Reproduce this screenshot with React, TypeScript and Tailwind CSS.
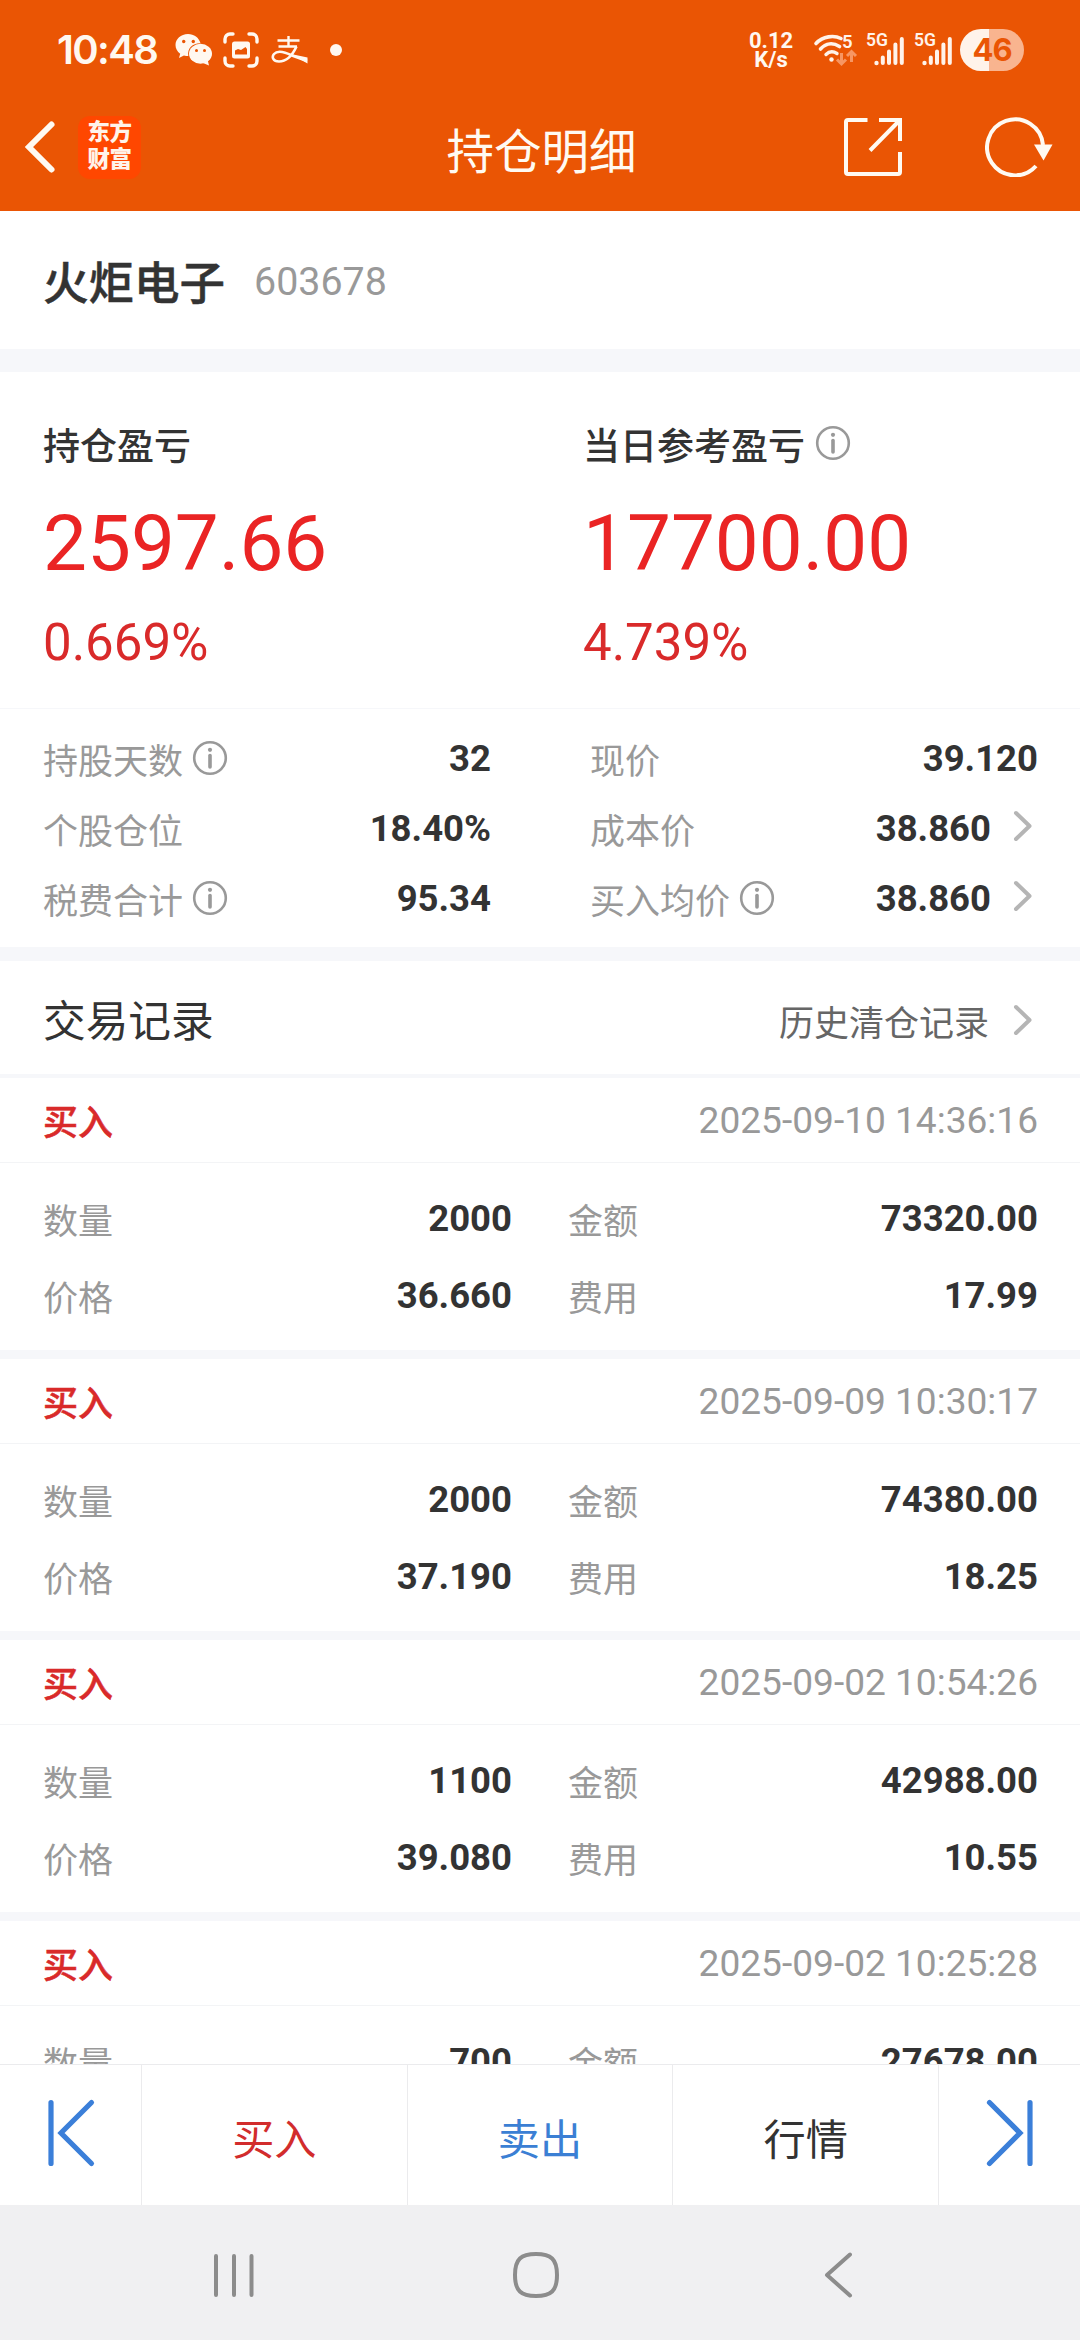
import type { ReactNode } from "react";
import clsx from "clsx";

type Trade = {
  side: string;
  time: string;
  quantity: string;
  amount: string;
  price: string;
  fee: string;
};

const trades: Trade[] = [
  { side: "买入", time: "2025-09-10 14:36:16", quantity: "2000", amount: "73320.00", price: "36.660", fee: "17.99" },
  { side: "买入", time: "2025-09-09 10:30:17", quantity: "2000", amount: "74380.00", price: "37.190", fee: "18.25" },
  { side: "买入", time: "2025-09-02 10:54:26", quantity: "1100", amount: "42988.00", price: "39.080", fee: "10.55" },
  { side: "买入", time: "2025-09-02 10:25:28", quantity: "700", amount: "27678.00", price: "39.540", fee: "6.79" },
];

const InfoIcon = () => (
  <svg width="36" height="36" viewBox="0 0 36 36" fill="none" className="shrink-0">
    <circle cx="18" cy="18" r="15.8" stroke="#999" strokeWidth="2.6" />
    <circle cx="18" cy="9.8" r="2.1" fill="#999" />
    <path d="M18 15.5V27" stroke="#999" strokeWidth="3.6" strokeLinecap="round" />
  </svg>
);

const ChevronIcon = () => (
  <svg width="20" height="32" viewBox="0 0 20 32" fill="none" className="shrink-0">
    <path d="M3 3L16.5 16L3 29" stroke="#b5b5b5" strokeWidth="4" strokeLinecap="round" strokeLinejoin="round" />
  </svg>
);

const SignalIcon = () => (
  <svg width="40" height="36" viewBox="0 0 40 36" className="shrink-0 overflow-visible">
    <text x="0" y="13.5" fontSize="17.5" fontWeight="600" fill="#fff3ea" fontFamily="Roboto, sans-serif" textLength="22">
      5G
    </text>
    <circle cx="10.5" cy="31" r="2.2" fill="#fff3ea" />
    <path d="M16.8 25.5V31M23 19.5V31M29.4 12.5V31M35.8 7V31" stroke="#fff3ea" strokeWidth="4" strokeLinecap="round" />
  </svg>
);

const StatusBar = () => (
  <div className="flex h-[84px] items-center justify-between pt-4 pr-14 pl-[57px] text-[#fff8f0]">
    <div className="flex items-center">
      <span className="w-[101px] font-[Inter] text-[40px] leading-none font-semibold tracking-[-1.6px]">10:48</span>
      {/* wechat */}
      <svg width="38" height="34" viewBox="0 0 38 34" className="ml-[17px]">
        <path
          fill="currentColor"
          d="M13 1C5.8 1 .5 6 .5 12c0 3.6 1.7 6.5 4.7 8.7L4 25l4.900-2.600c1.600.4 3 .6 4.400.6C12 15 18 10 25.500 10.300 24 4.500 19 1 13 1Z"
        />
        <ellipse cx="25.5" cy="20.8" rx="11.5" ry="10" fill="currentColor" />
        <path fill="currentColor" d="M28 30l6 2.500-1.200-5z" />
        <g fill="#ea5504">
          <circle cx="8.7" cy="8.5" r="1.7" />
          <circle cx="18.3" cy="8.5" r="1.7" />
          <circle cx="21.5" cy="17.5" r="1.5" />
          <circle cx="29.5" cy="17.5" r="1.5" />
        </g>
      </svg>
      {/* screenshot */}
      <svg width="36" height="36" viewBox="0 0 36 36" fill="none" className="ml-2.5">
        <path
          d="M10 2H7a5 5 0 0 0-5 5v3M26 2h3a5 5 0 0 1 5 5v3M10 34H7a5 5 0 0 1-5-5v-3M26 34h3a5 5 0 0 0 5-5v-3"
          stroke="currentColor"
          strokeWidth="3.4"
          strokeLinecap="round"
        />
        <rect x="9" y="9.5" width="18" height="17" rx="2.5" fill="currentColor" />
        <path d="M12 22.500v-4l3-1.500 3 1 4.500-3 1.500 2v5.500z" fill="#ea5504" />
      </svg>
      {/* alipay */}
      <svg width="38" height="30" viewBox="0 0 38 30" fill="none" stroke="currentColor" className="ml-3">
        <path d="M6.5 5.5H28.5M17.5 1V11.5M7.5 11.5H26" strokeWidth="2.4" />
        <path d="M25.5 11.5C22 19 16 26.5 8 26.5C2 26.5 .5 22 3 19C6.5 15 14 17 21 20.5L36 26" strokeWidth="2.6" />
        <path d="M20 19L36.5 22.5V28.5Z" fill="currentColor" stroke="none" />
      </svg>
      <span className="ml-[21px] size-3 rounded-full bg-[#fff8f0]" />
    </div>
    <div className="flex items-center">
      <div className="w-[46px] text-center font-[Roboto] text-[22px] leading-[19px] font-bold">
        <p>0.12</p>
        <p>K/s</p>
      </div>
      <svg width="46" height="36" viewBox="0 0 46 36" fill="none" className="ml-[19px]" stroke="#fff3ea">
        <path d="M3 11.5C10 4 21 3 28 6.5" strokeWidth="3.6" strokeLinecap="round" />
        <path d="M7.5 17C13 11 20 10.5 26.5 14.5" strokeWidth="3.6" strokeLinecap="round" />
        <path d="M13 22.5C16.5 19 20 19 24 21.5" strokeWidth="3.4" strokeLinecap="round" />
        <circle cx="18.5" cy="27.5" r="2.2" fill="#fff3ea" stroke="none" />
        <text x="29" y="16" fontSize="18.5" fontWeight="600" fill="#fff3ea" stroke="none" fontFamily="Roboto, sans-serif">
          5
        </text>
        <path d="M28.5 21V32M24 27.5L28.5 32L33 27.5M38.5 30V20M34 24L38.5 19.5L43 24" stroke="#f79663" strokeWidth="3" />
      </svg>
      <div className="ml-[7px] flex gap-2">
        <SignalIcon />
        <SignalIcon />
      </div>
      <div className="ml-1.5 flex h-[42px] w-16 items-center justify-center rounded-full bg-linear-to-r from-[#fff3ea] from-45% to-[#f9b48f] to-45% font-[Inter] text-[31px] font-bold tracking-[-1px] text-[#ea5504]">
        46
      </div>
    </div>
  </div>
);

const TitleBar = () => (
  <div className="grid h-[127px] grid-cols-3 items-center pr-[27px] pl-6 pb-px">
    <div className="flex items-center">
      <svg width="32" height="54" viewBox="0 0 32 54" fill="none">
        <path d="M27.5 4.5L5 27L27.5 49.5" stroke="#fffaf2" strokeWidth="6" strokeLinecap="round" />
      </svg>
      <div className="ml-[22px] flex h-[63px] w-[63px] flex-col items-center justify-center rounded-xl bg-[#ff4700] pb-0.5 text-[22.5px] leading-[27px] font-black tracking-[-0.5px] text-[#fff3ea]">
        <span>东方</span>
        <span>财富</span>
      </div>
    </div>
    <h1 className="pt-3.5 pl-1.5 text-center text-[47.5px] text-[#fffaf2]">持仓明细</h1>
    <div className="flex items-center justify-end gap-[82px]">
      <svg width="60" height="60" viewBox="0 0 60 60" fill="none" stroke="#fffaf2" strokeWidth="4">
        <path d="M24.5 3H5a2 2 0 0 0-2 2V55a2 2 0 0 0 2 2H55a2 2 0 0 0 2-2V35M36 3H57V24M56 4L27 33.5" />
      </svg>
      <svg width="68" height="60" viewBox="0 0 68 60" fill="none">
        <path d="M51 49A28 28 0 1 1 58 28" stroke="#fffaf2" strokeWidth="4" />
        <path d="M49 27.5H67.5L58.5 43.5Z" fill="#fffaf2" />
      </svg>
    </div>
  </div>
);

type StatProps = {
  label: string;
  value: string;
  info?: boolean;
  link?: boolean;
};

const Stat = ({ label, value, info, link }: StatProps) => (
  <div className="flex h-[70px] items-center text-[35px] leading-[48px]">
    <span className="pt-2.5 text-[#999]">{label}</span>
    {info && (
      <span className="ml-[9px]">
        <InfoIcon />
      </span>
    )}
    <span className="ml-auto pt-px font-[Roboto] text-[36.5px] font-bold">{value}</span>
    {link && (
      <span className="mr-[5px] mb-1 ml-[22px]">
        <ChevronIcon />
      </span>
    )}
  </div>
);

type ProfitProps = {
  title: string;
  amount: string;
  percent: string;
  children?: ReactNode;
};

const Profit = ({ title, amount, percent, children }: ProfitProps) => (
  <div className="w-[540px] shrink-0">
    <div className="flex h-[54px] items-center">
      <span className="pt-2 text-[37px] font-medium">{title}</span>
      {children}
    </div>
    <p className="mt-[26px] font-[Roboto] text-[78.2px] leading-[92px] text-[#ea2424]">{amount}</p>
    <p className="mt-6 font-[Roboto] text-[51px] leading-[60px] text-[#d92a2a]">{percent}</p>
  </div>
);

const TradeCard = ({ trade }: { trade: Trade }) => (
  <div className="h-[281px] shrink-0 border-b-[9px] border-[#f6f7fa]">
    <div className="flex h-[85px] items-center justify-between border-b border-[#f3f4f6] pr-[42px] pl-[43px]">
      <span className="pt-2 text-[35px] font-medium text-[#d92a2a] [-webkit-text-stroke:0.5px]">{trade.side}</span>
      <span className="pt-px font-[Roboto] text-[37.1px] text-[#999]">{trade.time}</span>
    </div>
    <div className="flex pt-[18px] pr-[42px] pl-[43px]">
      <div className="w-[469px]">
        <TradeField label="数量" value={trade.quantity} />
        <TradeField label="价格" value={trade.price} />
      </div>
      <div className="ml-14 flex-1">
        <TradeField label="金额" value={trade.amount} />
        <TradeField label="费用" value={trade.fee} />
      </div>
    </div>
  </div>
);

const TradeField = ({ label, value }: { label: string; value: string }) => (
  <div className="flex h-[77px] items-center justify-between">
    <span className="pt-2 text-[35px] text-[#999]">{label}</span>
    <span className="font-[Roboto] text-[36.5px] font-bold">{value}</span>
  </div>
);

const actions = [
  { label: "买入", color: "text-[#d22c2c]" },
  { label: "卖出", color: "text-[#3b7fd4]" },
  { label: "行情", color: "text-[#333]" },
];

const App = () => {
  return (
    <div className="flex h-[2340px] w-[1080px] flex-col overflow-hidden bg-white font-[Roboto,'Noto_Sans_CJK_SC',sans-serif] text-[#333]">
      <header className="h-[211px] shrink-0 bg-[#ea5504]">
        <StatusBar />
        <TitleBar />
      </header>

      <section className="flex h-[138px] shrink-0 items-center px-[43px]">
        <span className="pt-2.5 text-[45.5px] font-medium [-webkit-text-stroke:0.5px]">火炬电子</span>
        <span className="ml-[29px] pt-1 font-[Roboto] text-[39.4px] text-[#999]">603678</span>
      </section>

      <section className="h-[360px] shrink-0 border-t-[23px] border-b border-[#f6f7fa] pl-[43px]">
        <div className="flex pt-[45px]">
          <Profit title="持仓盈亏" amount="2597.66" percent="0.669%" />
          <Profit title="当日参考盈亏" amount="17700.00" percent="4.739%">
            <span className="mb-[3px] ml-2.5">
              <InfoIcon />
            </span>
          </Profit>
        </div>
      </section>

      <section className="flex h-[252px] shrink-0 border-b-[14px] border-[#f6f7fa] pt-[14px] pr-[42px] pl-[43px]">
        <div className="w-[448px]">
          <Stat label="持股天数" value="32" info />
          <Stat label="个股仓位" value="18.40%" />
          <Stat label="税费合计" value="95.34" info />
        </div>
        <div className="ml-[99px] flex-1">
          <Stat label="现价" value="39.120" />
          <Stat label="成本价" value="38.860" link />
          <Stat label="买入均价" value="38.860" info link />
        </div>
      </section>

      <section className="flex h-[117px] shrink-0 items-center justify-between border-b-4 border-[#f6f7fa] pr-[47px] pl-[43px]">
        <h2 className="pt-2.5 text-[42.7px]">交易记录</h2>
        <div className="flex items-center pt-1 text-[35px] text-[#666]">
          <span className="pt-3">历史清仓记录</span>
          <span className="ml-6">
            <ChevronIcon />
          </span>
        </div>
      </section>

      <main className="flex min-h-0 flex-1 flex-col overflow-hidden">
        {trades.map((trade) => (
          <TradeCard key={trade.time} trade={trade} />
        ))}
      </main>

      <footer className="flex h-[141px] shrink-0 border-t border-[#ebebed] bg-white">
        <button className="flex w-[141px] items-center justify-center pb-1">
          <svg width="50" height="70" viewBox="0 0 50 70" fill="none" stroke="#3b7fd9" strokeWidth="5.2" strokeLinecap="round">
            <path d="M5 4.5V65.5M45.5 4.5L15 35L45.5 65.5" />
          </svg>
        </button>
        {actions.map(({ label, color }) => (
          <button key={label} className={clsx("flex-1 border-l border-[#ebebed] pt-3 text-[42.2px]", color)}>
            {label}
          </button>
        ))}
        <button className="flex w-[142px] items-center justify-center border-l border-[#ebebed] pb-1">
          <svg width="50" height="70" viewBox="0 0 50 70" fill="none" stroke="#3b7fd9" strokeWidth="5.2" strokeLinecap="round">
            <path d="M45 4.5V65.5M4.5 4.5L35 35L4.5 65.5" />
          </svg>
        </button>
      </footer>

      {/* system navigation */}
      <nav className="flex h-[135px] shrink-0 items-center bg-[#f0f0f2] pt-1 pl-[212px]">
        <svg width="44" height="48" viewBox="0 0 44 48" stroke="#8c8c8c" strokeWidth="4" strokeLinecap="round">
          <path d="M4 5V44M22 5V44M39.5 5V44" />
        </svg>
        <svg width="50" height="50" viewBox="0 0 50 50" fill="none" className="ml-[255px]">
          <path
            d="M25 4C40 4 46 9 46 25S40 46 25 46S4 41 4 25S10 4 25 4Z"
            stroke="#8c8c8c"
            strokeWidth="4"
          />
        </svg>
        <svg width="32" height="50" viewBox="0 0 32 50" fill="none" className="ml-[261px]">
          <path d="M28 4.5L5 25L28 45.5" stroke="#8c8c8c" strokeWidth="4" strokeLinecap="round" strokeLinejoin="round" />
        </svg>
      </nav>
    </div>
  );
};

export default App;
